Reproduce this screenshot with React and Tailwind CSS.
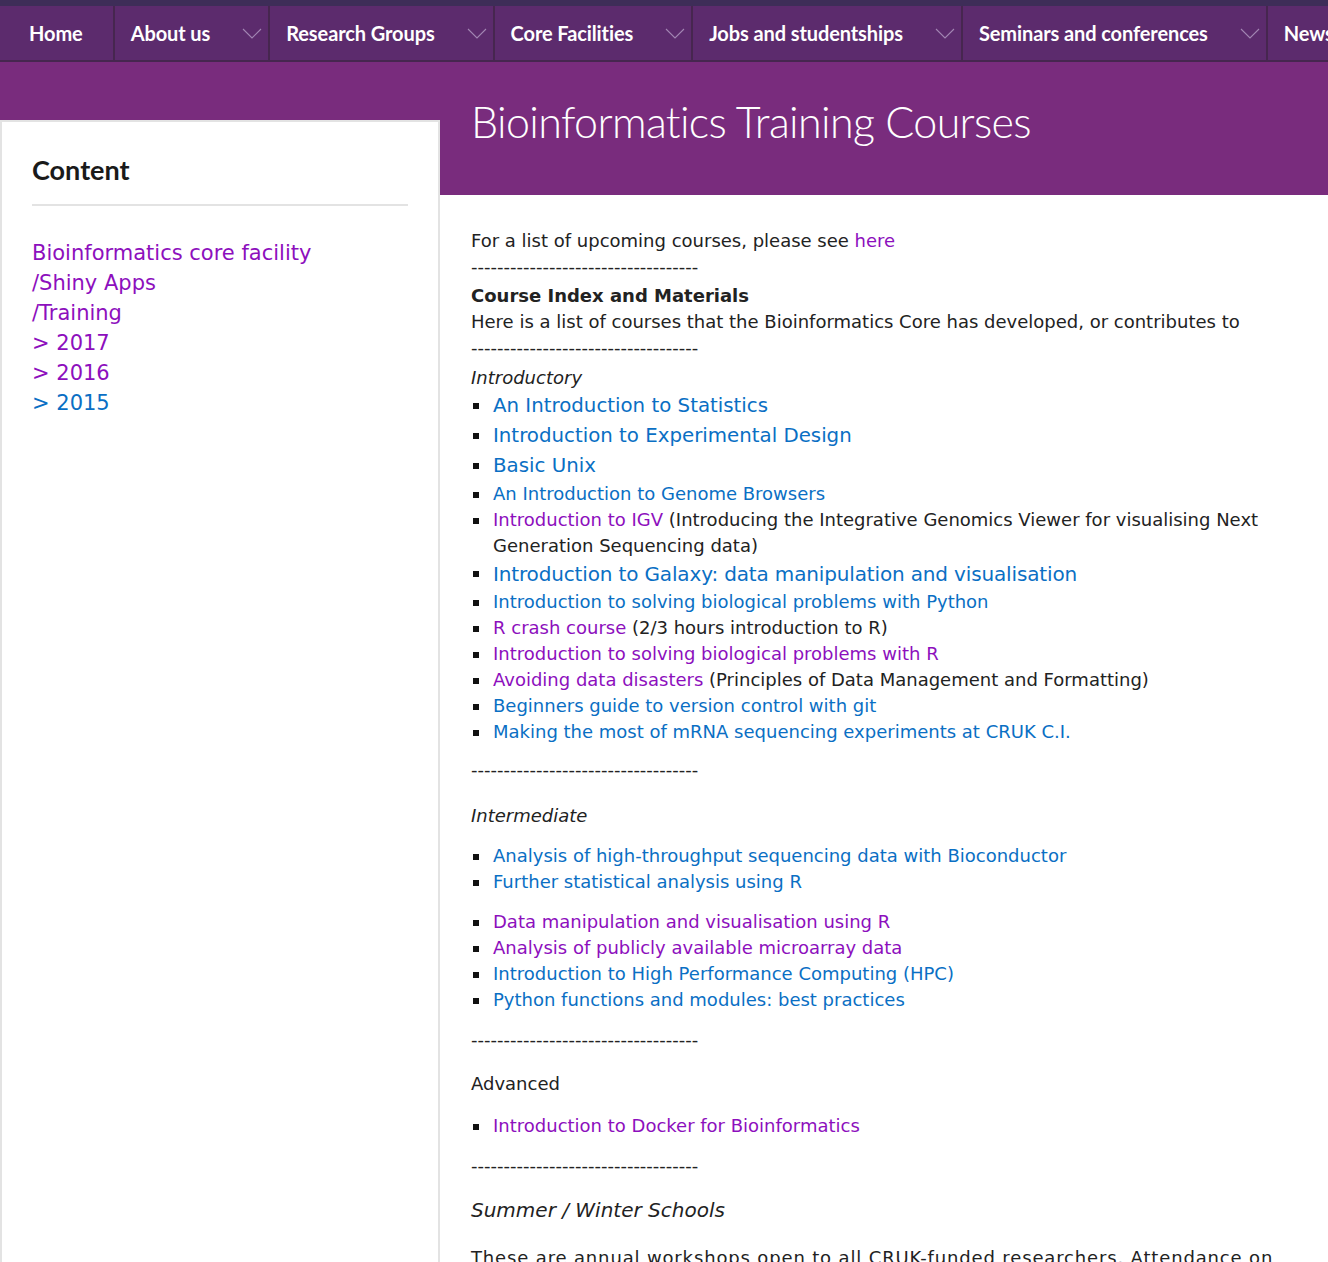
import React from 'react';

const NAV = [
  { label: 'Home', drop: false },
  { label: 'About us', drop: true },
  { label: 'Research Groups', drop: true },
  { label: 'Core Facilities', drop: true },
  { label: 'Jobs and studentships', drop: true },
  { label: 'Seminars and conferences', drop: true },
  { label: 'News', drop: false },
];

const SANS = '[font-family:DejaVu_Sans,Verdana,sans-serif]';
const SEGOE = '[font-family:Lato,Open_Sans,sans-serif]';

const BLUE = 'text-[#0a6fc4]';
const PURPLE = 'text-[#8d0fbd]';
const BIG = 'text-[19.8px] leading-[30px]';

const Chevron = () => (
  <svg width="20" height="11" viewBox="0 0 20 11" className="shrink-0">
    <path d="M1 1 L10 10 L19 1" fill="none" stroke="#a286b3" strokeWidth="1.1" />
  </svg>
);

const Bullet = ({ children, className = '' }) => (
  <li className={`flex items-start ${className}`}>
    <span className="w-[22px] shrink-0 flex">
      <span className="mt-[0.6em] ml-[2px] w-[6px] h-[6px] bg-[#111]" />
    </span>
    <span>{children}</span>
  </li>
);

const Dashes = ({ className = '' }) => (
  <p className={className}>-----------------------------------</p>
);

export default function App() {
  return (
    <div className="min-h-screen bg-white text-[#222]">
      {/* Top nav */}
      <div className="h-[6px] bg-[#3e2d58]" />
      <nav className={`${SEGOE} flex h-[56px] bg-[#5c2b6d] border-b-2 border-[#46264f] overflow-hidden`}>
        {NAV.map((item, i) => (
          <div
            key={item.label}
            className={`flex items-center shrink-0 text-white font-bold text-[20px] tracking-[-0.1px] ${
              i > 0 ? 'border-l-2 border-[#46264f]' : ''
            } ${item.drop ? 'pl-4 pr-[6px] gap-[32px]' : i === 0 ? 'pl-[29px] pr-[30px]' : 'pl-4 pr-6'}`}
          >
            <span>{item.label}</span>
            {item.drop && <Chevron />}
          </div>
        ))}
      </nav>

      {/* Title band */}
      <header className="h-[133px] bg-[#792c7d] pl-[471px] pt-[30px]">
        <h1 className={`${SEGOE} font-light text-white text-[43px] leading-[60px] tracking-[-0.65px]`}>
          Bioinformatics Training Courses
        </h1>
      </header>

      <div className="flex">
        {/* Sidebar */}
        <aside className="relative w-[440px] shrink-0 -mt-[75px] bg-white border-x-2 border-t-2 border-[#e3e3e3] px-[30px] pt-[30px] min-h-[1142px]">
          <h2 className={`${SEGOE} font-bold text-[27px] leading-[36px] text-[#1a1a1a]`}>Content</h2>
          <div className="mt-[16px] h-[2px] bg-[#e3e3e3]" />
          <div className={`${SANS} text-[21px] leading-[30px] mt-[32px]`}>
            <a className={`block ${PURPLE}`}>Bioinformatics core facility</a>
            <a className={`block ${PURPLE}`}>/Shiny Apps</a>
            <a className={`block ${PURPLE}`}>/Training</a>
            <a className={`block ${PURPLE}`}>&gt; 2017</a>
            <a className={`block ${PURPLE}`}>&gt; 2016</a>
            <a className={`block ${BLUE}`}>&gt; 2015</a>
          </div>
        </aside>

        {/* Main content */}
        <main className={`${SANS} flex-1 pl-[31px] pr-[38px] pt-[33px] text-[18px] leading-[26px]`}>
          <p>
            For a list of upcoming courses, please see <a className={PURPLE}>here</a>
          </p>
          <Dashes />
          <p className="font-bold mt-[3px]">Course Index and Materials</p>
          <p>Here is a list of courses that the Bioinformatics Core has developed, or contributes to</p>
          <Dashes />
          <p className="italic mt-[4px]">Introductory</p>

          <ul>
            <Bullet className={BIG}>
              <a className={BLUE}>An Introduction to Statistics</a>
            </Bullet>
            <Bullet className={BIG}>
              <a className={BLUE}>Introduction to Experimental Design</a>
            </Bullet>
            <Bullet className={BIG}>
              <a className={BLUE}>Basic Unix</a>
            </Bullet>
            <Bullet>
              <a className={BLUE}>An Introduction to Genome Browsers</a>
            </Bullet>
            <Bullet>
              <a className={PURPLE}>Introduction to IGV</a> (Introducing the Integrative Genomics Viewer for visualising Next
              Generation Sequencing data)
            </Bullet>
            <Bullet className="text-[20px] leading-[30px] tracking-[-0.15px]">
              <a className={BLUE}>Introduction to Galaxy: data manipulation and visualisation</a>
            </Bullet>
            <Bullet>
              <a className={BLUE}>Introduction to solving biological problems with Python</a>
            </Bullet>
            <Bullet>
              <a className={PURPLE}>R crash course</a> (2/3 hours introduction to R)
            </Bullet>
            <Bullet>
              <a className={PURPLE}>Introduction to solving biological problems with R</a>
            </Bullet>
            <Bullet>
              <a className={PURPLE}>Avoiding data disasters</a> (Principles of Data Management and Formatting)
            </Bullet>
            <Bullet>
              <a className={BLUE}>Beginners guide to version control with git</a>
            </Bullet>
            <Bullet>
              <a className={BLUE}>Making the most of mRNA sequencing experiments at CRUK C.I.</a>
            </Bullet>
          </ul>

          <Dashes className="mt-[12px]" />
          <p className="italic mt-[20px]">Intermediate</p>

          <ul className="mt-[14px]">
            <Bullet>
              <a className={BLUE}>Analysis of high-throughput sequencing data with Bioconductor</a>
            </Bullet>
            <Bullet>
              <a className={BLUE}>Further statistical analysis using R</a>
            </Bullet>
          </ul>
          <ul className="mt-[14px]">
            <Bullet>
              <a className={PURPLE}>Data manipulation and visualisation using R</a>
            </Bullet>
            <Bullet>
              <a className={PURPLE}>Analysis of publicly available microarray data</a>
            </Bullet>
            <Bullet>
              <a className={BLUE}>Introduction to High Performance Computing (HPC)</a>
            </Bullet>
            <Bullet>
              <a className={BLUE}>Python functions and modules: best practices</a>
            </Bullet>
          </ul>

          <Dashes className="mt-[14px]" />
          <p className="mt-[18px]">Advanced</p>
          <ul className="mt-[16px]">
            <Bullet>
              <a className={PURPLE}>Introduction to Docker for Bioinformatics</a>
            </Bullet>
          </ul>

          <Dashes className="mt-[14px]" />
          <p className="italic text-[20px] leading-[30px] mt-[16px]">Summer / Winter Schools</p>
          <p className="mt-[20px] tracking-[0.85px]">
            These are annual workshops open to all CRUK-funded researchers. Attendance on these courses is by
            application only.
          </p>
        </main>
      </div>
    </div>
  );
}
